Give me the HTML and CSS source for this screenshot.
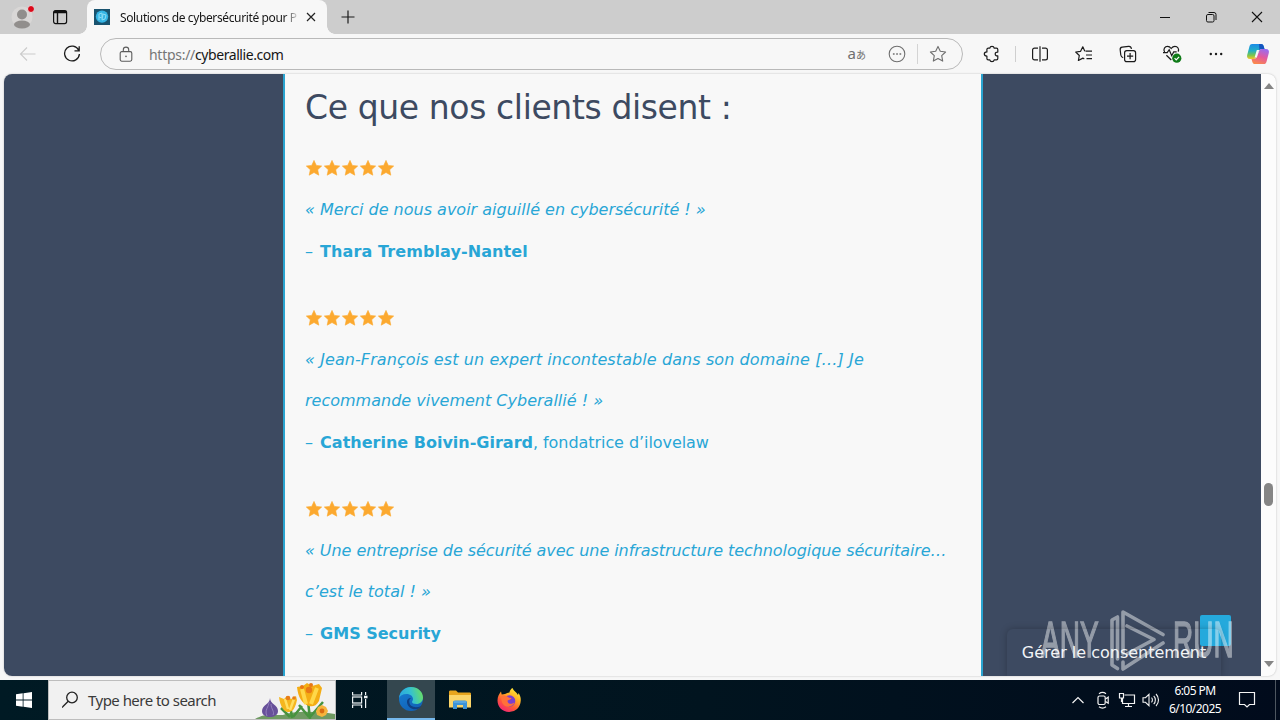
FILE: index.html
```html
<!DOCTYPE html>
<html lang="fr">
<head>
    <meta charset="UTF-8">
    <meta name="viewport" content="width=device-width, initial-scale=1.0">
    <title>Solutions de cybersécurité pour PME</title>
    <link rel="stylesheet" href="styles.css">
</head>
<body>
    <!-- Shared icon shapes -->
    <svg class="defs">
        <defs>
            <symbol id="star" viewBox="0 0 18 18">
                <path d="M9 1.4l2.3 5 5.4.6-4 3.7 1.1 5.5L9 13.5l-4.8 2.7 1.1-5.5-4-3.7 5.4-.6z" fill="#fca92f" stroke="#fca92f" stroke-width=".6" stroke-linejoin="round"/>
            </symbol>
        </defs>
    </svg>

    <div class="tabbar">
        <div class="profile">
            <svg width="24" height="26" viewBox="0 0 24 26">
                <circle cx="12" cy="13" r="10.5" fill="#d9d7d6"/>
                <circle cx="12" cy="10.500" r="5" fill="#918e8c"/>
                <ellipse cx="12" cy="20.500" rx="8" ry="4" fill="#918e8c"/>
                <circle cx="21" cy="5" r="3.5" fill="#dc0819" stroke="#e4e2e2"/>
            </svg>
        </div>
        <svg class="tab-actions" width="16" height="16" viewBox="0 0 16 16" fill="none" stroke="#111" stroke-width="1.2">
            <rect x="1.6" y="1.6" width="13" height="13" rx="2"/>
            <path d="M1.6 3.5h13M5.5 4v10.6" stroke-width="1.4"/>
            <path d="M2 2.7h12.4" stroke-width="2"/>
        </svg>
        <div class="tab">
            <svg class="favicon" width="16" height="16" viewBox="0 0 16 16">
                <rect width="16" height="16" fill="#19536f"/>
                <circle cx="8" cy="7.6" r="6.2" fill="#35b5e5"/>
                <path d="M5 11V5l3-1v4m0 3l1-6 3 1-1 4-3 1M5 8l3 1" fill="none" stroke="#8bdcf5" stroke-width="1"/>
            </svg>
            <span class="tab-title">Solutions de cybersécurité pour P</span>
            <svg class="tab-close" width="10" height="10" viewBox="0 0 10 10" stroke="#222" stroke-width="1.2"><path d="M1 1l8 8M9 1L1 9"/></svg>
        </div>
        <svg class="new-tab" width="14" height="14" viewBox="0 0 14 14" stroke="#1b1b1b" stroke-width="1.2"><path d="M7 .5v13M.5 7h13"/></svg>
        <div class="window-buttons">
            <svg width="12" height="12" viewBox="0 0 12 12" fill="none" stroke="#111"><path d="M1 6.5h10"/></svg>
            <svg width="12" height="12" viewBox="0 0 12 12" fill="none" stroke="#111"><rect x="1.5" y="3.5" width="7.5" height="7.5" rx="1.4"/><path d="M3.5 1.5H9a2 2 0 012 2V9"/></svg>
            <svg width="12" height="12" viewBox="0 0 12 12" fill="none" stroke="#111" stroke-width="1.1"><path d="M1 1l10 10M11 1L1 11"/></svg>
        </div>
    </div>

    <div class="toolbar">
        <div class="nav">
            <svg width="18" height="16" viewBox="0 0 18 16" fill="none" stroke="#cbcbcb" stroke-width="1.1"><path d="M8 1.5L1.5 8 8 14.5M1.5 8h15"/></svg>
            <svg width="18" height="18" viewBox="0 0 18 18" fill="none" stroke="#1b1b1b" stroke-width="1.3"><path d="M15.7 5.3A7.4 7.4 0 1016.4 9M16.2 1.2v4.6h-4.7"/></svg>
        </div>
        <div class="address">
            <svg class="lock" width="14" height="16" viewBox="0 0 14 16" fill="none" stroke="#5c5c5c" stroke-width="1.1"><rect x="1.2" y="5.6" width="11.6" height="9.6" rx="1.6"/><path d="M4.3 5.5V3.8a2.7 2.7 0 015.4 0v1.7"/><circle cx="7" cy="10.4" r=".8" fill="#5c5c5c" stroke="none"/></svg>
            <span class="url"><span class="scheme">https://</span>cyberallie.com</span>
            <span class="translate">a<span>あ</span></span>
            <svg class="more-circle" width="18" height="18" viewBox="0 0 18 18" fill="none" stroke="#6f6f6f" stroke-width="1.1"><circle cx="9" cy="9" r="7.8"/><path d="M4.9 9h1.7M8.2 9h1.7M11.5 9h1.7" stroke-width="1.7"/></svg>
            <span class="divider"></span>
            <svg class="fav" width="18" height="18" viewBox="0 0 18 18" fill="none" stroke="#6f6f6f" stroke-width="1.1" stroke-linejoin="round"><path d="M9 1.4l2.3 4.9 5.3.7-3.9 3.7 1 5.4L9 13.5l-4.7 2.6 1-5.4L1.4 7l5.3-.7z"/></svg>
        </div>
        <div class="tools">
            <svg width="18" height="18" viewBox="0 0 18 18" fill="none" stroke="#1b1b1b" stroke-width="1.2" stroke-linejoin="round"><path d="M5.200 3.200h1.600C7 2 7.800 1.300 9 1.300s2 .7 2.200 1.900h2.300c.8 0 1.300.5 1.300 1.300v2.600c-1.700-.2-2.600.6-2.600 1.900s.9 2.100 2.600 1.900v2.600c0 .8-.5 1.300-1.300 1.300h-2.300C11 16 10.200 16.700 9 16.700s-2-.7-2.200-1.900H5.200c-.8 0-1.300-.5-1.300-1.300v-2.400C2.400 11 1.300 10.300 1.300 9s1.100-2 2.600-2.100V4.500c0-.8.500-1.300 1.300-1.300z"/></svg>
            <svg width="18" height="18" viewBox="0 0 18 18" fill="none" stroke="#1b1b1b" stroke-width="1.2"><path d="M7 3.100H3.500A1.900 1.900 0 001.600 5v8a1.900 1.900 0 001.900 1.900H7M11 3.100h3.500A1.900 1.900 0 0116.400 5v8a1.900 1.900 0 01-1.900 1.900H11M9 1.300v15.400"/></svg>
            <svg width="18" height="18" viewBox="0 0 18 18" fill="none" stroke="#1b1b1b" stroke-width="1.2" stroke-linejoin="round"><path d="M10.500 6.200H17M11 10h6M11.500 13.700H17M9.800 6.200L7.800 1.800l-2.200 4.500-4.900.7 3.600 3.500-.9 5 4.500-2.400 1.400.8"/></svg>
            <svg width="18" height="18" viewBox="0 0 18 18" fill="none" stroke="#1b1b1b" stroke-width="1.2"><rect x="5.600" y="5.600" width="11" height="11" rx="2.200"/><path d="M11.100 8v6.200M8 11.100h6.200M4.200 12.600C2.500 12.300 2 11.300 1.800 10L1.200 5C1 3.500 1.800 2.400 3.200 2.200L9.500 1.400c1.600-.2 2.700.8 3 2.400"/></svg>
            <svg width="20" height="20" viewBox="0 0 20 20" fill="none" stroke="#1b1b1b" stroke-width="1.2"><path d="M2.600 8C.8 5 3 2.400 5.500 2.400c1.700 0 2.700.8 3.700 2.100 1-1.300 2-2.100 3.700-2.100 2.700 0 4.600 2.500 3.200 5.200M1 8.700h4.200l2-3 2.500 6 2-3.800h3M4.400 11.200L9.300 16"/><circle cx="14.800" cy="14.200" r="4.600" fill="#0f7b18" stroke="none"/><path d="M12.600 14.200l1.600 1.600 2.900-3" stroke="#fff"/></svg>
            <svg width="16" height="16" viewBox="0 0 16 16" fill="#1b1b1b"><circle cx="2.800" cy="8" r="1.200"/><circle cx="8" cy="8" r="1.200"/><circle cx="13.200" cy="8" r="1.200"/></svg>
            <svg width="24" height="22" viewBox="0 0 24 22">
                <defs>
                    <linearGradient id="cpA" x1="0" y1="0" x2="0" y2="1"><stop offset="0" stop-color="#1b8be8"/><stop offset=".45" stop-color="#22b0c5"/><stop offset=".75" stop-color="#7ac64c"/><stop offset="1" stop-color="#f6c52b"/></linearGradient>
                    <linearGradient id="cpB" x1=".7" y1="0" x2=".3" y2="1"><stop offset="0" stop-color="#9a6cf0"/><stop offset=".5" stop-color="#e4599d"/><stop offset="1" stop-color="#fb8a4b"/></linearGradient>
                </defs>
                <path d="M6 1h9c1.500 0 2.200.8 2.700 2.300l.8 2.700h-2.800c-1.500 0-2.200.7-2.600 2L11 13c-.6 2-1.500 3-3.200 3H4C1.500 16 .6 14.200 1.200 12L3.500 3.300C4 1.700 4.700 1 6 1z" fill="url(#cpA)"/>
                <path d="M18 21H9c-1.500 0-2.200-.8-2.700-2.300L5.500 16h2.300c1.700 0 2.600-1 3.200-3l2.100-5c.4-1.300 1.100-2 2.600-2H20c2.500 0 3.400 1.800 2.800 4l-2.300 8.700C20 20.300 19.300 21 18 21z" fill="url(#cpB)"/>
                <path d="M13 1h2c1.500 0 2.200.8 2.700 2.300l.8 2.700h-2.800c-1.200 0-1.900.5-2.300 1.300z" fill="#1455bf"/>
                <path d="M10.800 7h2.500l-2.500 7.500H8.600z" fill="#f7f7f7"/>
            </svg>
        </div>
    </div>

    <div class="browser">
        <div class="page">
            <main class="content">
                <h2>Ce que nos clients disent :</h2>

                <div class="review">
                    <div class="stars">
                        <svg><use href="#star"/></svg><svg><use href="#star"/></svg><svg><use href="#star"/></svg><svg><use href="#star"/></svg><svg><use href="#star"/></svg>
                    </div>
                    <p><em>« Merci de nous avoir aiguillé en cybersécurité ! »</em></p>
                    <p><span class="dash">–</span> <strong class="wide">Thara Tremblay-Nantel</strong></p>
                </div>

                <div class="review">
                    <div class="stars">
                        <svg><use href="#star"/></svg><svg><use href="#star"/></svg><svg><use href="#star"/></svg><svg><use href="#star"/></svg><svg><use href="#star"/></svg>
                    </div>
                    <p><em><span class="wide">« Jean-François est un expert incontestable dans son domaine […] Je</span><br>recommande vivement Cyberallié ! »</em></p>
                    <p><span class="dash">–</span> <strong>Catherine Boivin-Girard</strong><span class="tight">, fondatrice d’ilovelaw</span></p>
                </div>

                <div class="review">
                    <div class="stars">
                        <svg><use href="#star"/></svg><svg><use href="#star"/></svg><svg><use href="#star"/></svg><svg><use href="#star"/></svg><svg><use href="#star"/></svg>
                    </div>
                    <p><em><span class="tight">« Une entreprise de sécurité avec une infrastructure technologique sécuritaire…</span><br>c’est le total ! »</em></p>
                    <p><span class="dash">–</span> <strong>GMS Security</strong></p>
                </div>
            </main>
            <div class="to-top"></div>
            <div class="watermark">
                <span>ANY</span>
                <svg width="56" height="64" viewBox="0 0 56 64" fill="none" stroke="#fff" stroke-width="3.600" stroke-linejoin="round" stroke-linecap="round">
                    <path d="M8.500 9L3 12v45l5.500 3.500M8.500 9v42"/>
                    <path d="M14 46V4l40 22.500M18 18l27 13.500L18 46M54 35L14 61v-7"/>
                </svg>
                <span>RUN</span>
            </div>
            <div class="consent">Gérer le consentement</div>
        </div>
        <div class="scrollbar">
            <span class="arrow-up"></span>
            <span class="thumb"></span>
            <span class="arrow-down"></span>
        </div>
    </div>

    <div class="taskbar">
        <div class="start">
            <svg width="16" height="16" viewBox="0 0 16 16" fill="#fff"><path d="M0 2.300L6.700 1.300v6.300H0zM7.500 1.200L16 0v7.600H7.500zM0 8.400h6.700v6.300L0 13.700zM7.500 8.400H16V16l-8.500-1.200z"/></svg>
        </div>
        <div class="search">
            <svg class="glass" width="18" height="18" viewBox="0 0 18 18" fill="none" stroke="#222" stroke-width="1.300"><circle cx="10" cy="6.500" r="5.300"/><path d="M6.200 10.300L0 16.500"/></svg>
            <span>Type here to search</span>
            <svg class="flowers" width="80" height="38" viewBox="0 0 80 38">
                <path d="M0 38C10 32 18 34 28 34 38 30 60 30 80 33v5z" fill="#6f9a62"/>
                <path d="M37 37l-2-14M35 36l-9-9M38 36l9-11M55 38l-2-18M54 36L44 24M55 36l13-15" stroke="#47933f" stroke-width="2.500" fill="none"/>
                <path d="M15 17c0 6-8 7-8 13 0 4 4 6 8 6s8-2 8-6c0-6-8-7-8-13z" fill="#67509a"/>
                <path d="M14 21c0 5-5 8-2 14M16 23c0 5 4 8 2 11" stroke="#9480bd" fill="none"/>
                <path d="M24 16l5 2 3-3 4 3 5-3 1 4-1 4c-2 6-4 8-8 8s-8-6-9-15z" fill="#f5b61d"/>
                <path d="M30 18l3 10M39 18l-4 11" stroke="#ffdf61" stroke-width="2.500"/>
                <circle cx="33" cy="17" r="2.300" fill="#e77d18"/><circle cx="39" cy="17" r="1.800" fill="#e77d18"/>
                <path d="M42 6l6-1 4-3 5 3 7-2 3 4-3 13c-3 5-6 6-10 5-7-2-11-9-12-19z" fill="#f4ad14"/>
                <path d="M47 8l4 15M62 7l-6 16" stroke="#ffd849" stroke-width="4"/>
                <circle cx="54" cy="9" r="3.200" fill="#e87816"/><circle cx="56" cy="4" r="2" fill="#e87816"/><circle cx="47" cy="6" r="2" fill="#e87816"/>
                <path d="M63 26l4-2 4 2 2 4-2 4-4 2-5-2-1-4z" fill="#f6b43c"/>
                <circle cx="67" cy="30" r="2.400" fill="#d96c12"/>
            </svg>
        </div>
        <div class="task view">
            <svg width="18" height="18" viewBox="0 0 18 18" fill="none" stroke="#eef3f5" stroke-width="1.200"><path d="M1.600 1v3h9V1M1.600 17v-3h9v3"/><rect x="1.600" y="6" width="9" height="6"/><path d="M14.600 1v3M14.600 8v9"/><path d="M13 6h3.500" stroke-width="2.600"/></svg>
        </div>
        <div class="task active">
            <svg width="26" height="26" viewBox="0 0 26 26">
                <defs>
                    <linearGradient id="edgeA" x1="0" y1=".5" x2="1" y2=".3"><stop offset="0" stop-color="#2aa6df"/><stop offset=".5" stop-color="#35c1d0"/><stop offset="1" stop-color="#6be05f"/></linearGradient>
                    <linearGradient id="edgeB" x1="0" y1="0" x2=".5" y2="1"><stop offset="0" stop-color="#1780d4"/><stop offset="1" stop-color="#1263b8"/></linearGradient>
                </defs>
                <circle cx="13" cy="13" r="12" fill="url(#edgeB)"/>
                <path d="M1 12C2 5 7 1 13 1c7 0 12 5 12 10.500 0 4-3 6.500-6.500 6.500-3 0-4.500-1-4.500-2 0-.8 1-1.200 1-3 0-2.500-2.500-5-6.500-5C4.500 8 2 10 1 12z" fill="url(#edgeA)"/>
                <path d="M9 15c-.5 5 4 8.500 9 8.300 2-.2 4-1.500 5.300-3.300-6 2.600-12 .8-12-4.500 0-1.800.8-3 2-3.500C11 11.500 9.200 13 9 15z" fill="#103f82"/>
            </svg>
        </div>
        <div class="task">
            <svg width="24" height="22" viewBox="0 0 24 22">
                <path d="M1 3c0-1 .5-1.500 1.500-1.500H8l2 2h11.500c1 0 1.500.5 1.500 1.500v3H1z" fill="#e8a51d"/>
                <path d="M1 6h22v12.500H1z" fill="#fcd569"/>
                <path d="M5 20v-6.500c0-1.200.7-2 2-2h10c1.300 0 2 .8 2 2V20h-4v-4H9v4z" fill="#3d93d8"/>
                <path d="M6 13h12" stroke="#77b9e8"/>
            </svg>
        </div>
        <div class="task">
            <svg width="26" height="26" viewBox="0 0 26 26">
                <defs>
                    <linearGradient id="ff" x1=".8" y1="0" x2=".2" y2="1"><stop offset="0" stop-color="#fff13b"/><stop offset=".35" stop-color="#ffae24"/><stop offset=".65" stop-color="#ff5a36"/><stop offset="1" stop-color="#f1207c"/></linearGradient>
                </defs>
                <path d="M16.500 1c1 3 4 4 5.500 7l.5-2c2 3 2.500 5.500 2.200 8A11.500 11.500 0 0113 25C6.500 25 1.500 20 1.500 13.500c0-4 1.500-6.500 3.500-9l.7 3L9 7c1.500-1 3-1.500 4.500-1.500.3-2 1.300-3.500 3-4.500z" fill="url(#ff)"/>
                <circle cx="13.500" cy="14" r="5.800" fill="#7a3fd0"/>
                <path d="M5.500 9c3-1.500 6 .2 7.500 1.800l2.500.2c-.5 1.800-3 1.800-4 2.800 0 3 3.500 4.200 7 1.700-1.500 5-10 6-12.500 0-.8-2.500-.8-4.500-.5-6.500z" fill="#ff7139"/>
            </svg>
        </div>

        <div class="tray">
            <svg width="14" height="14" viewBox="0 0 14 14" fill="none" stroke="#f3f3f3" stroke-width="1.200"><path d="M1.500 10L7 4.500l5.500 5.500"/></svg>
            <svg width="14" height="18" viewBox="0 0 14 18" fill="none" stroke="#f3f3f3" stroke-width="1.200"><rect x="2" y="5" width="7.200" height="8.500" rx="1.500"/><path d="M9.500 8l2.700-1.800v6L9.500 10.500M3 2.800c2-1.500 5-1.500 7 0M3 15.800c2 1.500 5 1.500 7 0"/></svg>
            <svg width="18" height="16" viewBox="0 0 18 16" fill="none" stroke="#f3f3f3" stroke-width="1.200"><path d="M6.500 3h10v8.500H4.500V6M10.500 11.500v3M7 14.500h7M1.500 1.500h4V6h-4zM3.500 6v4"/></svg>
            <svg width="18" height="16" viewBox="0 0 18 16" fill="none" stroke="#f3f3f3" stroke-width="1.100"><path d="M1 5.700h2.500L7 2.300v11.400l-3.500-3.400H1zM9.500 5.700c1.200 1.200 1.200 3.400 0 4.600M11.700 3.800c2.200 2.200 2.200 6.200 0 8.400M14 2c3.300 3.300 3.300 8.700 0 12"/></svg>
            <div class="clock"><span>6:05 PM</span><span>6/10/2025</span></div>
            <svg width="18" height="18" viewBox="0 0 18 18" fill="none" stroke="#f3f3f3" stroke-width="1.200"><path d="M1.500 1.500h15v12h-5L9 16l-2.500-2.500h-5z"/></svg>
        </div>
    </div>
</body>
</html>
```
FILE: styles.css
```css
* {
    box-sizing: border-box;
}
body {
    margin: 0;
    width: 1280px;
    height: 720px;
    overflow: hidden;
    display: flex;
    flex-direction: column;
    background: #f7f7f7;
    font-family: "Noto Sans", "Open Sans", sans-serif;
}
svg {
    display: block;
    flex: none;
}
.defs {
    position: absolute;
    width: 0;
    height: 0;
}

/* Tab strip */
.tabbar {
    height: 34px;
    flex: none;
    display: flex;
    align-items: center;
    background: #cdcdcd;
}
.profile {
    margin-left: 10px;
}
.tab-actions {
    margin-left: 18px;
}
.tab {
    position: relative;
    align-self: stretch;
    width: 240px;
    margin-left: 19px;
    padding: 0 10px 0 7px;
    display: flex;
    align-items: center;
    background: #f7f7f7;
    border-radius: 8px 8px 0 0;
}
.tab::before, .tab::after {
    content: "";
    position: absolute;
    bottom: 0;
    width: 8px;
    height: 8px;
}
.tab::before {
    left: -8px;
    background: radial-gradient(circle at 0 0, #cdcdcd 7.5px, #f7f7f7 8px);
}
.tab::after {
    right: -8px;
    background: radial-gradient(circle at 100% 0, #cdcdcd 7.5px, #f7f7f7 8px);
}
.tab-title {
    width: 178px;
    margin-left: 10px;
    white-space: nowrap;
    font-size: 12px;
    letter-spacing: -0.37px;
    background: linear-gradient(90deg, #161616 164px, #ddd 178px);
    background-clip: text;
    color: transparent;
}
.tab-close {
    margin-left: 8px;
}
.new-tab {
    margin-left: 14px;
}
.window-buttons {
    margin-left: auto;
    display: flex;
    gap: 34px;
    padding-right: 17px;
}

/* Address bar row */
.toolbar {
    height: 40px;
    flex: none;
    display: flex;
    align-items: center;
}
.nav {
    width: 100px;
    display: flex;
    align-items: center;
    gap: 26px;
    padding-left: 19px;
}
.address {
    width: 863px;
    height: 32px;
    display: flex;
    align-items: center;
    border: 1px solid #b9b9b9;
    border-radius: 16px;
    padding: 0 15px 0 18px;
}
.url {
    margin-left: 16px;
    font-size: 14px;
    letter-spacing: -0.43px;
    color: #161616;
}
.scheme {
    letter-spacing: -0.28px;
    color: #767676;
}
.translate {
    margin-left: auto;
    font-size: 15px;
    line-height: 20px;
    color: #6f6f6f;
}
.translate span {
    font-family: "Noto Sans CJK JP", sans-serif;
    font-size: 10px;
}
.more-circle {
    margin-left: 22px;
}
.divider {
    width: 1px;
    height: 20px;
    margin: 0 11px;
    background: #d4d4d4;
}
.tools {
    flex: 1;
    position: relative;
    display: grid;
    grid-template-columns: 57px 40px 48px 40px 48px 40px 44px;
    justify-items: center;
    align-items: center;
}
.tools::before {
    content: "";
    position: absolute;
    left: 52px;
    width: 1px;
    height: 16px;
    background: #cfcfcf;
}

/* Page area */
.browser {
    height: 602px;
    margin-left: 4px;
    margin-right: 4px;
    flex: none;
    display: flex;
    border-radius: 8px;
    overflow: hidden;
    background: #fcfcfc;
    box-shadow: 0 0 2px rgba(0, 0, 0, 0.25);
}
.page {
    position: relative;
    width: 1257px;
    padding-left: 279px;
    background: #3d4a61;
    overflow: hidden;
}
.content {
    width: 700px;
    height: 602px;
    padding: 0 0 0 20px;
    background: #f8f8f8;
    border: solid #2aa4d0;
    border-width: 0 2px;
    font-family: "DejaVu Sans", Verdana, sans-serif;
    font-size: 16px;
    line-height: 41.5px;
    color: #28a6d6;
}
.content h2 {
    margin: 0 0 19.5px;
    padding-top: 14px;
    font-size: 33px;
    line-height: 40px;
    font-weight: 400;
    letter-spacing: -0.38px;
    color: #3d4a61;
}
.content p {
    margin: 0;
    white-space: nowrap;
}
.dash {
    margin-right: 2px;
}
.wide {
    letter-spacing: 0.09px;
}
.tight {
    letter-spacing: -0.06px;
}
.review {
    margin-bottom: 25px;
}
.stars {
    display: flex;
    align-items: center;
    height: 41.5px;
}
.stars svg {
    width: 18px;
    height: 18px;
}
.to-top {
    position: absolute;
    right: 30px;
    bottom: 30px;
    width: 31px;
    height: 31px;
    border-radius: 2px;
    background: #25a9dc;
}
.consent {
    position: absolute;
    right: 40px;
    bottom: 0;
    width: 214px;
    height: 47px;
    border-radius: 6px 6px 0 0;
    box-shadow: 0 0 7px rgba(0, 0, 0, 0.25);
    color: #f2f4f6;
    font: 16px/48px "DejaVu Sans", Verdana, sans-serif;
    text-align: center;
    white-space: nowrap;
}
.watermark {
    position: absolute;
    right: 28px;
    bottom: 4px;
    width: 192px;
    height: 64px;
    display: flex;
    align-items: center;
    justify-content: space-between;
    opacity: 0.45;
    color: #fff;
}
.watermark span {
    width: 60px;
    font: 50px/60px "Liberation Sans", Arial, sans-serif;
    -webkit-text-stroke: 1.5px #fff;
    transform: scaleX(0.56);
    transform-origin: left;
}
.scrollbar {
    width: 15px;
    display: flex;
    flex-direction: column;
    align-items: center;
}
.arrow-up, .arrow-down {
    border: 5px solid transparent;
}
.arrow-up {
    margin-top: 4px;
    border-bottom: 6px solid #858585;
}
.thumb {
    width: 9px;
    height: 23px;
    margin-top: 394px;
    border-radius: 5px;
    background: #858585;
}
.arrow-down {
    margin-top: auto;
    margin-bottom: 4px;
    border-top: 6px solid #858585;
}

/* Windows taskbar */
.taskbar {
    height: 40px;
    margin-top: 4px;
    flex: none;
    display: flex;
    background: linear-gradient(90deg, #001a24, #01141f 55%, #010b1c);
}
.start, .task {
    width: 48px;
    display: flex;
    align-items: center;
    justify-content: center;
}
.search {
    width: 288px;
    display: flex;
    align-items: center;
    padding-left: 13px;
    background: #f1f1f1;
    border: 1px solid #bdbdbd;
    font-size: 15px;
    letter-spacing: -0.53px;
    color: #3a3a3a;
}
.search span {
    margin-left: 8px;
    white-space: nowrap;
}
.flowers {
    margin-left: auto;
}
.active {
    margin: 0 1px 0 3px;
    background: #34474f;
    border-bottom: 2px solid #76b9ed;
}
.active + .task {
    margin-right: 1px;
}
.tray {
    margin-left: auto;
    width: 209px;
    display: grid;
    grid-template-columns: 22px 28px 20px 28px 60px 44px;
    align-items: center;
    justify-items: center;
    border-right: 1px solid #4d5660;
    margin-right: 4px;
}
.clock {
    display: flex;
    flex-direction: column;
    align-items: center;
    font-size: 12px;
    line-height: 18px;
    letter-spacing: -0.55px;
    color: #fff;
    white-space: nowrap;
}
```
